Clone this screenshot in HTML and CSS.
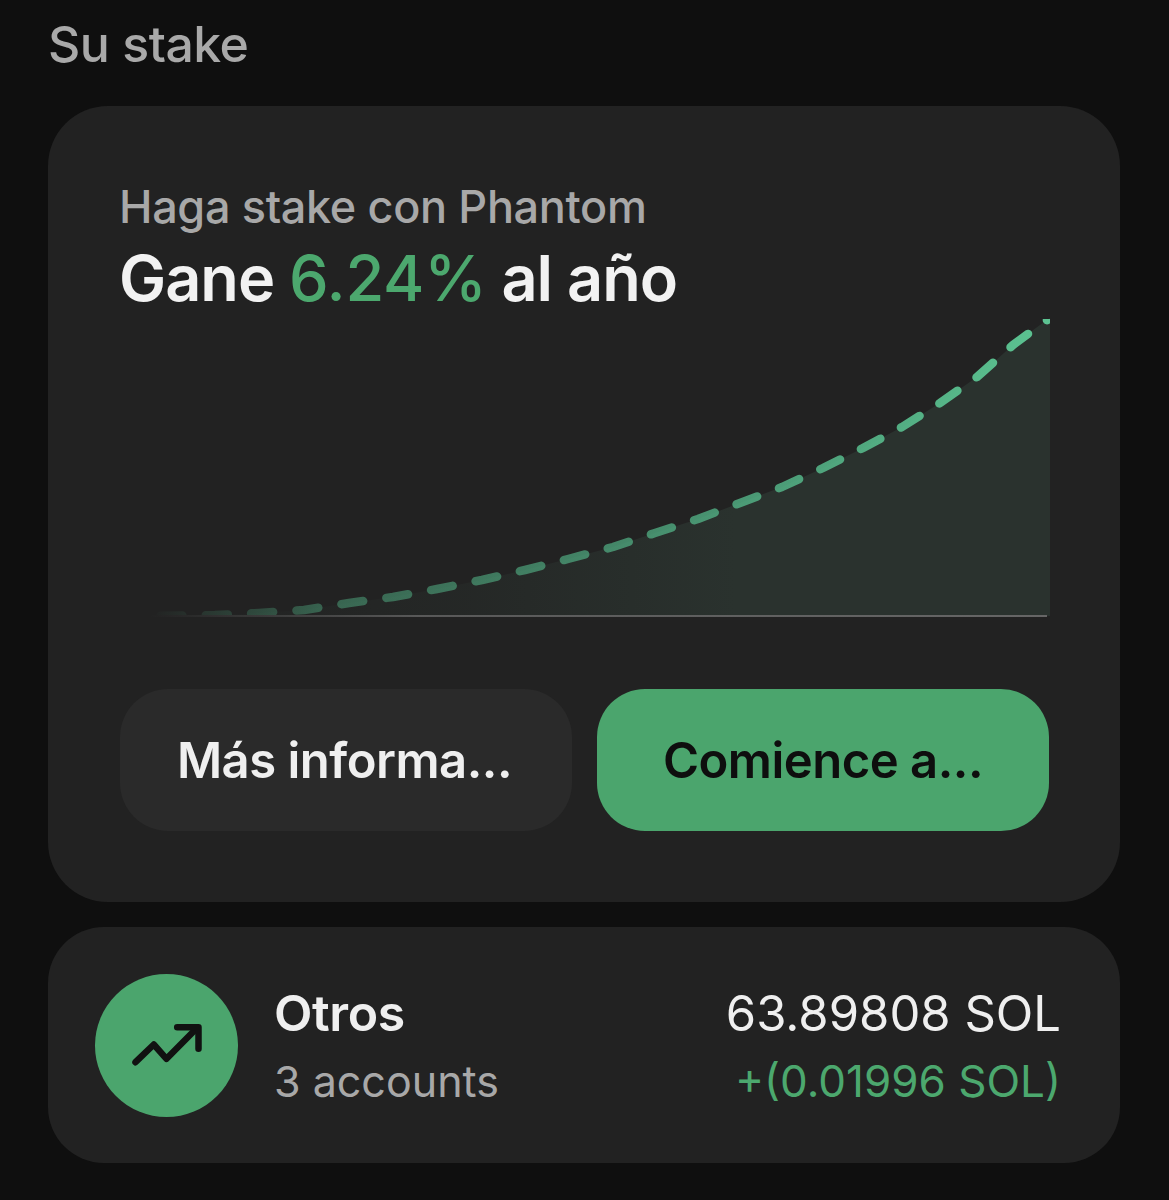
FILE: index.html
```html
<!DOCTYPE html>
<html lang="es">
<head>
<meta charset="utf-8">
<title>Su stake</title>
<link rel="stylesheet" href="styles.css">
</head>
<body>
<main class="page">
  <h1 class="page-title">Su stake</h1>
  <section class="card promo">
    <p class="promo-kicker">Haga stake con Phantom</p>
    <h2 class="promo-title">Gane <span class="green">6.24%</span> al año</h2>
    <svg class="chart" viewBox="0 0 930 300" width="930" height="300" aria-hidden="true">
      <defs>
        <linearGradient id="fade" x1="0" y1="0" x2="1" y2="0">
          <stop offset="0" stop-color="#2a322e" stop-opacity="0"/>
          <stop offset="0.35" stop-color="#2a322e" stop-opacity="0.35"/>
          <stop offset="0.65" stop-color="#2a322e" stop-opacity="1"/>
          <stop offset="1" stop-color="#2a322e" stop-opacity="1"/>
        </linearGradient>
        <linearGradient id="dash" gradientUnits="userSpaceOnUse" x1="30" y1="0" x2="930" y2="0">
          <stop offset="0" stop-color="#53b588" stop-opacity="0"/>
          <stop offset="0.2" stop-color="#53b588" stop-opacity="0.45"/>
          <stop offset="0.6" stop-color="#53b588" stop-opacity="0.75"/>
          <stop offset="1" stop-color="#5cc492" stop-opacity="1"/>
        </linearGradient>
        <linearGradient id="axis" x1="0" y1="0" x2="1" y2="0">
          <stop offset="0" stop-color="#666" stop-opacity="0"/>
          <stop offset="0.3" stop-color="#666" stop-opacity="0.8"/>
          <stop offset="1" stop-color="#666" stop-opacity="1"/>
        </linearGradient>
        <clipPath id="plot"><rect x="0" y="1" width="930" height="296"/></clipPath>
      </defs>
      <path class="area" fill="url(#fade)" d="M30 298 L95 297 L139 295 L184 292 L229 285 L273 279 L317 271 L362 262 L405 252 L448 241 L493 229 L535 215 L578 201 L620 185 L662 169 L703 150 L743 130 L782 109 L820 85 L857 59 L893 27 L920 7 L930 0 V298 Z"/>
      <g clip-path="url(#plot)">
        <path fill="none" stroke="url(#dash)" stroke-width="8.5" stroke-linecap="round" stroke-linejoin="round" stroke-dasharray="22 23.4" stroke-dashoffset="35" d="M30 298 L95 297 L139 295 L184 292 L229 285 L273 279 L317 271 L362 262 L405 252 L448 241 L493 229 L535 215 L578 201 L620 185 L662 169 L703 150 L743 130 L782 109 L820 85 L857 59 L893 27 L920 7 L930 0"/>
      </g>
      <rect class="axis" x="30" y="297" width="897" height="2" fill="url(#axis)"/>
    </svg>
    <div class="actions">
      <button class="btn btn-muted" type="button">Más informa...</button>
      <button class="btn btn-green" type="button">Comience a...</button>
    </div>
  </section>
  <section class="card account">
    <div class="avatar">
      <svg viewBox="0 0 72 48" width="72" height="48" aria-hidden="true">
        <path d="M4.5 41.2 L22.8 23.5 L35.5 37.8 L66.2 6.8" fill="none" stroke="#111" stroke-width="6.5" stroke-linecap="round" stroke-linejoin="round"/>
        <path d="M46.2 6.2 H67.5 V27.8" fill="none" stroke="#111" stroke-width="6.5" stroke-linecap="round" stroke-linejoin="round"/>
      </svg>
    </div>
    <div class="account-main">
      <div class="account-name">Otros</div>
      <div class="account-sub">3 accounts</div>
    </div>
    <div class="account-values">
      <div class="account-amount">63.89808 SOL</div>
      <div class="account-gain">+(0.01996 SOL)</div>
    </div>
  </section>
</main>
</body>
</html>
```
FILE: styles.css
```css
* { box-sizing: border-box; }
html, body { margin: 0; background: #0f0f0f; }
body { font-family: Inter, "Liberation Sans", sans-serif; }
.page { width: 1169px; height: 1200px; padding: 0 49px 0 48px; overflow: hidden; }
.page-title { margin: 0; height: 106px; padding-top: 16px; font-size: 50px; line-height: 56px; font-weight: 500; color: #a9a9a9; letter-spacing: -0.5px; }
.card { background: #222222; }
.promo { height: 796px; border-radius: 60px; padding: 76px 71px 0 72px; }
.promo-kicker { margin: 0 0 0 -1px; font-size: 45px; line-height: 50px; font-weight: 500; color: #a8a8a8; letter-spacing: -0.35px; }
.promo-title { margin: 10px 0 0 -1px; font-size: 63px; line-height: 72px; font-weight: 600; color: #f2f2f2; letter-spacing: -1px; }
.green { color: #4ca86e; font-weight: 500; letter-spacing: -0.2px; }
.chart { display: block; margin-top: 4px; }
.actions { display: grid; grid-template-columns: 452px 452px; column-gap: 25px; margin-top: 71px; }
.btn { height: 142px; border: 0; border-radius: 48px; font-family: inherit; font-size: 49px; font-weight: 600; letter-spacing: -0.5px; padding: 0; }
.btn-muted { background: #2a2a2a; color: #efefef; padding-right: 3px; }
.btn-green { background: #4ba56d; color: #0e0e0e; }
.account { height: 236px; margin-top: 25px; border-radius: 56px; padding: 0 59px 0 47px; display: flex; align-items: center; }
.avatar { width: 143px; height: 143px; border-radius: 50%; background: #4ba56d; display: flex; align-items: center; justify-content: center; }
.account-main { margin-left: 36px; flex: 1; padding-top: 4px; }
.account-name { font-size: 50px; line-height: 68px; font-weight: 600; color: #efefef; letter-spacing: -0.4px; }
.account-sub { font-size: 43px; line-height: 68px; color: #a8a8a8; }
.account-values { text-align: right; padding-top: 5px; }
.account-amount { font-size: 49px; line-height: 68px; color: #efefef; }
.account-gain { font-size: 44px; line-height: 67px; color: #4ca86e; }
```
